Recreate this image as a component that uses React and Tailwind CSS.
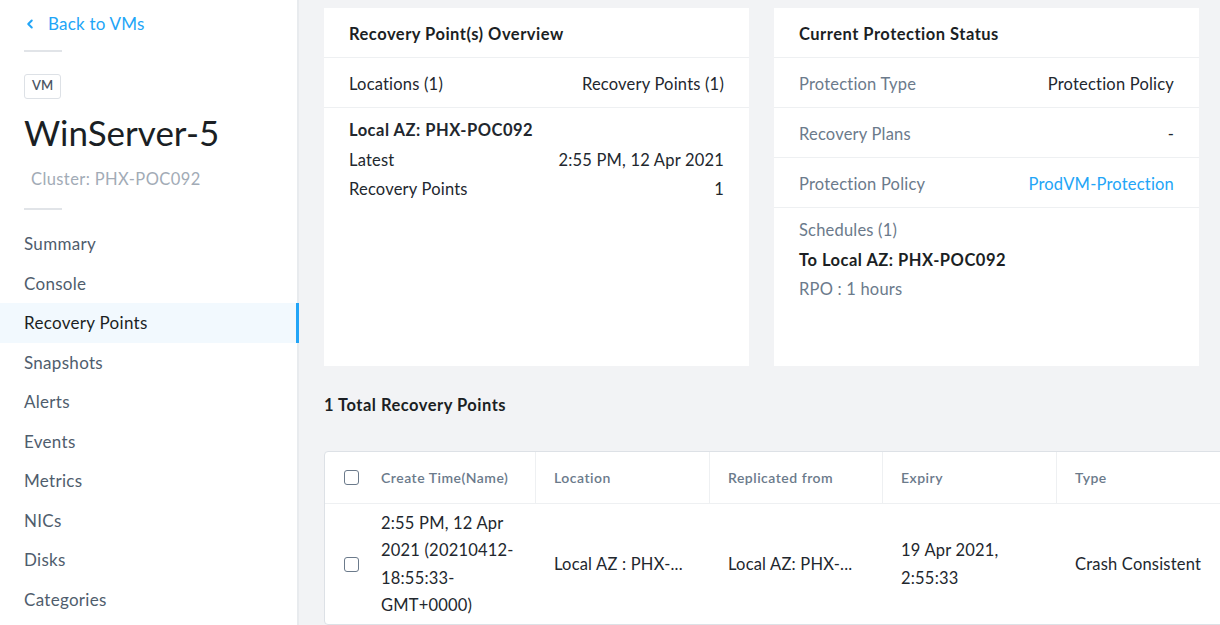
import { ChevronLeft } from "lucide-react";

const font = { fontFamily: "Lato, 'Open Sans', sans-serif" };

const navItems = [
  "Summary",
  "Console",
  "Recovery Points",
  "Snapshots",
  "Alerts",
  "Events",
  "Metrics",
  "NICs",
  "Disks",
  "Categories",
];

const Checkbox = () => (
  <span className="block w-[15px] h-[15px] rounded-[3px] border border-[#6b7a8b] bg-white" />
);

const Row = ({ label, value, valueClass = "text-[#22272e]" }) => (
  <div className="flex items-center justify-between h-[50px] pt-[4px] px-[25px] text-[16.5px] tracking-[0.2px] border-b border-[#eef0f2]">
    <span className="text-[#6b7a8b]">{label}</span>
    <span className={valueClass}>{value}</span>
  </div>
);

export default function App() {
  return (
    <div style={font} className="flex h-[625px] w-[1220px] overflow-hidden bg-[#f2f3f5]">
      {/* SIDEBAR */}
      <aside className="w-[299px] shrink-0 bg-white border-r-2 border-[#e8ebee] pt-[11px]">
        <div className="px-6">
          <div className="flex items-center gap-[11px] text-[#22a5f7] text-[17px] tracking-[0.2px]">
            <ChevronLeft className="w-[14px] h-[14px] -ml-[1px]" strokeWidth={3.5} />
            <span>Back to VMs</span>
          </div>
          <div className="mt-[13px] w-[38px] h-[2px] bg-[#e1e4e8]" />
          <span className="mt-[22px] inline-flex items-center justify-center h-[25px] px-[7px] border border-[#dde1e6] rounded-[3px] text-[13px] font-semibold text-[#4b5563]">
            VM
          </span>
          <h1 className="mt-[11px] text-[35px] leading-[44px] text-[#1b1f24]">WinServer-5</h1>
          <p className="mt-[13px] ml-[7px] text-[16.5px] tracking-[0.4px] text-[#a2abb6]">Cluster: PHX-POC092</p>
          <div className="mt-[17px] w-[38px] h-[2px] bg-[#e1e4e8]" />
        </div>
        <nav className="mt-[14px]">
          {navItems.map((item) => {
            const active = item === "Recovery Points";
            return (
              <div
                key={item}
                className={`relative h-[39.5px] flex items-center px-6 text-[17px] tracking-[0.3px] ${
                  active ? "bg-[#f2f9fe] text-[#1b1f24]" : "text-[#4f5d6d]"
                }`}
              >
                {item}
                {active && (
                  <span className="absolute -right-[2px] top-0 bottom-0 w-[3px] bg-[#22a5f7]" />
                )}
              </div>
            );
          })}
        </nav>
      </aside>

      {/* MAIN */}
      <main className="flex-1 pl-[25px] pt-2 min-w-0">
        <div className="flex gap-[25px] w-[875px]">
          {/* Overview card */}
          <section className="w-[425px] h-[358px] bg-white">
            <h2 className="h-[50px] pt-[4px] flex items-center px-[25px] text-[16.5px] tracking-[0.5px] font-bold text-[#1b1f24] border-b border-[#eef0f2]">
              Recovery Point(s) Overview
            </h2>
            <div className="flex items-center justify-between h-[50px] pt-[4px] px-[25px] text-[16.5px] tracking-[0.2px] text-[#22272e] border-b border-[#eef0f2]">
              <span>Locations (1)</span>
              <span>Recovery Points (1)</span>
            </div>
            <div className="px-[25px] pt-[8px] text-[16.5px] tracking-[0.2px] text-[#22272e] leading-[29.5px]">
              <div className="font-bold tracking-[0.5px]">Local AZ: PHX-POC092</div>
              <div className="flex justify-between">
                <span>Latest</span>
                <span>2:55 PM, 12 Apr 2021</span>
              </div>
              <div className="flex justify-between">
                <span>Recovery Points</span>
                <span>1</span>
              </div>
            </div>
          </section>

          {/* Protection status card */}
          <section className="w-[425px] h-[358px] bg-white">
            <h2 className="h-[50px] pt-[4px] flex items-center px-[25px] text-[16.5px] tracking-[0.5px] font-bold text-[#1b1f24] border-b border-[#eef0f2]">
              Current Protection Status
            </h2>
            <Row label="Protection Type" value="Protection Policy" />
            <Row label="Recovery Plans" value="-" />
            <Row label="Protection Policy" value="ProdVM-Protection" valueClass="text-[#22a5f7]" />
            <div className="px-[25px] pt-[8px] text-[16.5px] tracking-[0.2px] leading-[29.5px]">
              <div className="text-[#6b7a8b]">Schedules (1)</div>
              <div className="font-bold tracking-[0.5px] text-[#1b1f24]">To Local AZ: PHX-POC092</div>
              <div className="text-[#6b7a8b]">RPO : 1 hours</div>
            </div>
          </section>
        </div>

        <h3 className="mt-[27px] text-[16.5px] tracking-[0.5px] font-bold text-[#1b1f24]">1 Total Recovery Points</h3>

        {/* TABLE */}
        <div className="mt-[33px] w-[920px] bg-white border border-[#dde1e6] rounded-l-[4px]">
          <div className="flex h-[52px] border-b border-[#eef0f2] text-[14px] tracking-[0.5px] font-semibold text-[#6b7a8b]">
            <div className="w-[211px] flex items-center gap-[22px] pl-[19px] border-r border-[#eef0f2]">
              <Checkbox />
              <span>Create Time(Name)</span>
            </div>
            <div className="w-[174px] flex items-center pl-[18px] border-r border-[#eef0f2]">Location</div>
            <div className="w-[173px] flex items-center pl-[18px] border-r border-[#eef0f2]">Replicated from</div>
            <div className="w-[174px] flex items-center pl-[18px] border-r border-[#eef0f2]">Expiry</div>
            <div className="flex-1 flex items-center pl-[18px]">Type</div>
          </div>
          <div className="flex h-[120px] pt-[2px] text-[16.5px] tracking-[0.2px] text-[#22272e] leading-[27.5px]">
            <div className="w-[211px] flex items-center gap-[22px] pl-[19px]">
              <Checkbox />
              <span className="w-[140px]">2:55 PM, 12 Apr 2021 (20210412-18:55:33-GMT+0000)</span>
            </div>
            <div className="w-[174px] flex items-center pl-[18px]">Local AZ : PHX-...</div>
            <div className="w-[173px] flex items-center pl-[18px]">Local AZ: PHX-...</div>
            <div className="w-[174px] flex items-center pl-[18px]">
              <span className="w-[110px]">19 Apr 2021, 2:55:33</span>
            </div>
            <div className="flex-1 flex items-center pl-[18px]">Crash Consistent</div>
          </div>
        </div>
      </main>
    </div>
  );
}
